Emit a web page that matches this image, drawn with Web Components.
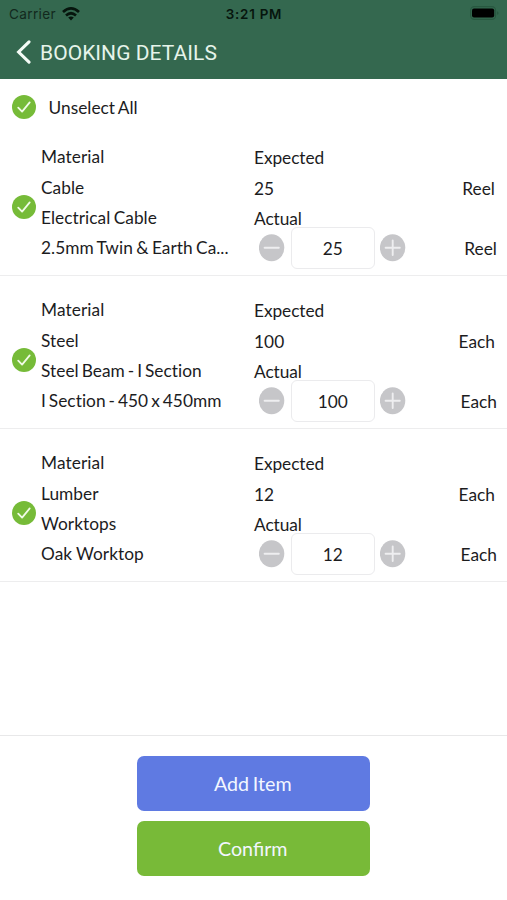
<!DOCTYPE html>
<html lang="en">
<head>
<meta charset="utf-8">
<title>Booking Details</title>
<style>
html, body { margin: 0; height: 100%; background: #fff; }
</style>
</head>
<body>
<booking-screen></booking-screen>
<script>
function define(name, html, setup) {
  const template = document.createElement('template');
  template.innerHTML = html;
  customElements.define(name, class extends HTMLElement {
    connectedCallback() {
      if (this.shadowRoot) return;
      const root = this.attachShadow({ mode: 'open' });
      root.append(template.content.cloneNode(true));
      if (setup) setup(this, root);
    }
  });
}

define('check-mark', `
<style>:host { display: block; width: 24px; height: 24px; } svg { display: block; }</style>
<svg width="24" height="24" viewBox="0 0 24 24"><circle cx="12" cy="12" r="12" fill="#76bb38"/><path d="M6.2 12.6l3.9 4 7.6-9.2" fill="none" stroke="#f0fbe6" stroke-width="1.8" stroke-linecap="round" stroke-linejoin="round"/></svg>`);

define('status-bar', `
<style>
:host { display: grid; grid-template-columns: 1fr auto 1fr; align-items: center; height: 27px; padding: 0 8px 0 9px; box-sizing: border-box; font: 500 13.2px Inter, sans-serif; color: #06150d; }
.left { display: flex; align-items: center; gap: 6px; color: #12291d; }
.left span { font-weight: 400; font-size: 13.6px; letter-spacing: .35px; }
.time { font-weight: 600; font-size: 13.4px; letter-spacing: .75px; }
.right { justify-self: end; margin-top: -1px; }
svg { display: block; }
</style>
<div class="left"><span>Carrier</span><svg width="18" height="14" viewBox="0 0 18 14"><g fill="none" stroke="#06150d" stroke-width="2.7"><path d="M1 5.1Q9-2.2 17 5.1"/><path d="M4 8.4Q9 4.1 14 8.4"/></g><path d="M6.2 10.5Q9 8.4 11.8 10.5L9 13.6Z" fill="#06150d"/></svg></div>
<span class="time">3:21 PM</span>
<svg class="right" width="29" height="14" viewBox="0 0 29 14"><rect x=".6" y=".6" width="25" height="12.8" rx="3.8" fill="none" stroke="#285840" stroke-width="1.1"/><rect x="2" y="2.4" width="22.2" height="9.2" rx="2" fill="#000"/><path d="M27 5.2q1.6.4 1.6 1.8t-1.6 1.8z" fill="#285840"/></svg>`);

define('nav-bar', `
<style>
:host { display: flex; align-items: center; gap: 9px; height: 51px; padding: 0 16px; box-sizing: border-box; font: 400 21px/28px Roboto, sans-serif; letter-spacing: .05px; color: #e6f4ea; }
svg { display: block; margin-top: -1px; }
span { padding-top: 1px; }
</style>
<svg width="15" height="24" viewBox="0 0 15 24"><path d="M13 1.8L2.6 12 13 22.2" fill="none" stroke="#f4fbf6" stroke-width="3.1" stroke-linecap="round"/></svg>
<span><slot></slot></span>`);

define('round-button', `
<style>:host { display: block; width: 26px; height: 28px; } svg { display: block; }</style>
<svg width="26" height="28" viewBox="0 0 26 28"><ellipse cx="12.6" cy="13.8" rx="12.7" ry="13.5" fill="#c6c6c9"/><path fill="none" stroke="#eeeef0" stroke-width="1.9" stroke-linecap="round"/></svg>`,
(host, root) => root.querySelector('path').setAttribute('d', host.getAttribute('kind') === 'plus' ? 'M5.6 13.8H19.8M12.7 6.5V21' : 'M5.6 13.8H19.8'));

define('quantity-stepper', `
<style>
:host { display: flex; align-items: center; gap: 6px; height: 31px; padding-left: 5px; }
.box { display: flex; align-items: center; justify-content: center; box-sizing: border-box; width: 84.5px; height: 42px; flex: none; margin-top: -1px; padding-top: 2px; border: 1px solid #ebebed; border-radius: 6px; background: #fff; }
round-button { margin-top: -2px; }
.box { margin-left: -.5px; }
.box + round-button { margin-left: -1px; }
</style>
<round-button kind="minus"></round-button><div class="box"><slot></slot></div><round-button kind="plus"></round-button>`);

define('material-item', `
<style>
:host { display: grid; grid-template-columns: 41px 213px 1fr auto; grid-template-rows: 31px 31px 29px 31px; align-items: center; box-sizing: border-box; height: 153px; padding: 19px 10px 0 0; border-bottom: 1px solid #ededee; white-space: nowrap; font-variant-ligatures: none; word-spacing: var(--gap, -1.5px); letter-spacing: .04px; }
check-mark { grid-row: 1 / 5; padding-left: 12px; margin-top: 8px; }
.w { grid-column: 3 / 5; letter-spacing: -.06px; }
.u { text-align: right; }
.u.e { padding-right: 2px; }
.left { padding-bottom: 2px; }
.head { letter-spacing: .1px; }
</style>
<check-mark></check-mark>
<span class="left head">Material</span><span class="w">Expected</span>
<span class="left k"></span><span class="q"></span><span class="u e"></span>
<span class="left t"></span><span class="w">Actual</span>
<span class="left n"></span><quantity-stepper></quantity-stepper><span class="u"></span>`,
(host, root) => {
  root.querySelector('.k').textContent = host.getAttribute('kind');
  root.querySelector('.t').textContent = host.getAttribute('type');
  root.querySelector('.n').textContent = host.getAttribute('name');
  root.querySelector('.q').textContent = host.getAttribute('quantity');
  root.querySelector('quantity-stepper').textContent = host.getAttribute('quantity');
  root.querySelectorAll('.u').forEach(u => u.textContent = host.getAttribute('unit'));
});

define('select-all', `
<style>:host { display: flex; align-items: center; gap: 13px; height: 44px; padding: 12px 12px 0; box-sizing: border-box; word-spacing: -1px; }
span { padding-top: 2px; margin-left: -.4px; }</style>
<check-mark></check-mark><span><slot></slot></span>`);

define('action-button', `
<style>
:host { display: flex; align-items: center; justify-content: center; width: 233px; height: 55px; box-sizing: border-box; padding-right: 1.5px; border-radius: 7px; background: var(--fill); color: #f2f6ff; font-size: 19.7px; word-spacing: -1.3px; }
</style><slot></slot>`);

define('booking-screen', `
<style>
:host { display: flex; flex-direction: column; height: 900px; overflow: hidden; background: #fff; color: #1c1c1e; font: 400 17.3px/24px Lato, sans-serif; }
header { background: #34684f; height: 79px; flex: none; }
main { flex: 1; }
footer { display: flex; flex-direction: column; align-items: center; gap: 10px; height: 165px; box-sizing: border-box; padding: 20px 0 0; border-top: 1px solid #e8e8e9; }
.cable { --gap: -1.1px; }
.lumber { --gap: -.3px; }
.add { --fill: #5f7ae2; }
.confirm { --fill: #78ba38; }
</style>
<header><status-bar></status-bar><nav-bar>BOOKING DETAILS</nav-bar></header>
<main>
<select-all>Unselect All</select-all>
<material-item class="cable" kind="Cable" type="Electrical Cable" name="2.5mm Twin &amp; Earth Ca..." quantity="25" unit="Reel"></material-item>
<material-item kind="Steel" type="Steel Beam - I Section" name="I Section - 450 x 450mm" quantity="100" unit="Each"></material-item>
<material-item class="lumber" kind="Lumber" type="Worktops" name="Oak Worktop" quantity="12" unit="Each"></material-item>
</main>
<footer><action-button class="add">Add Item</action-button><action-button class="confirm">Confirm</action-button></footer>`);
</script>
</body>
</html>
